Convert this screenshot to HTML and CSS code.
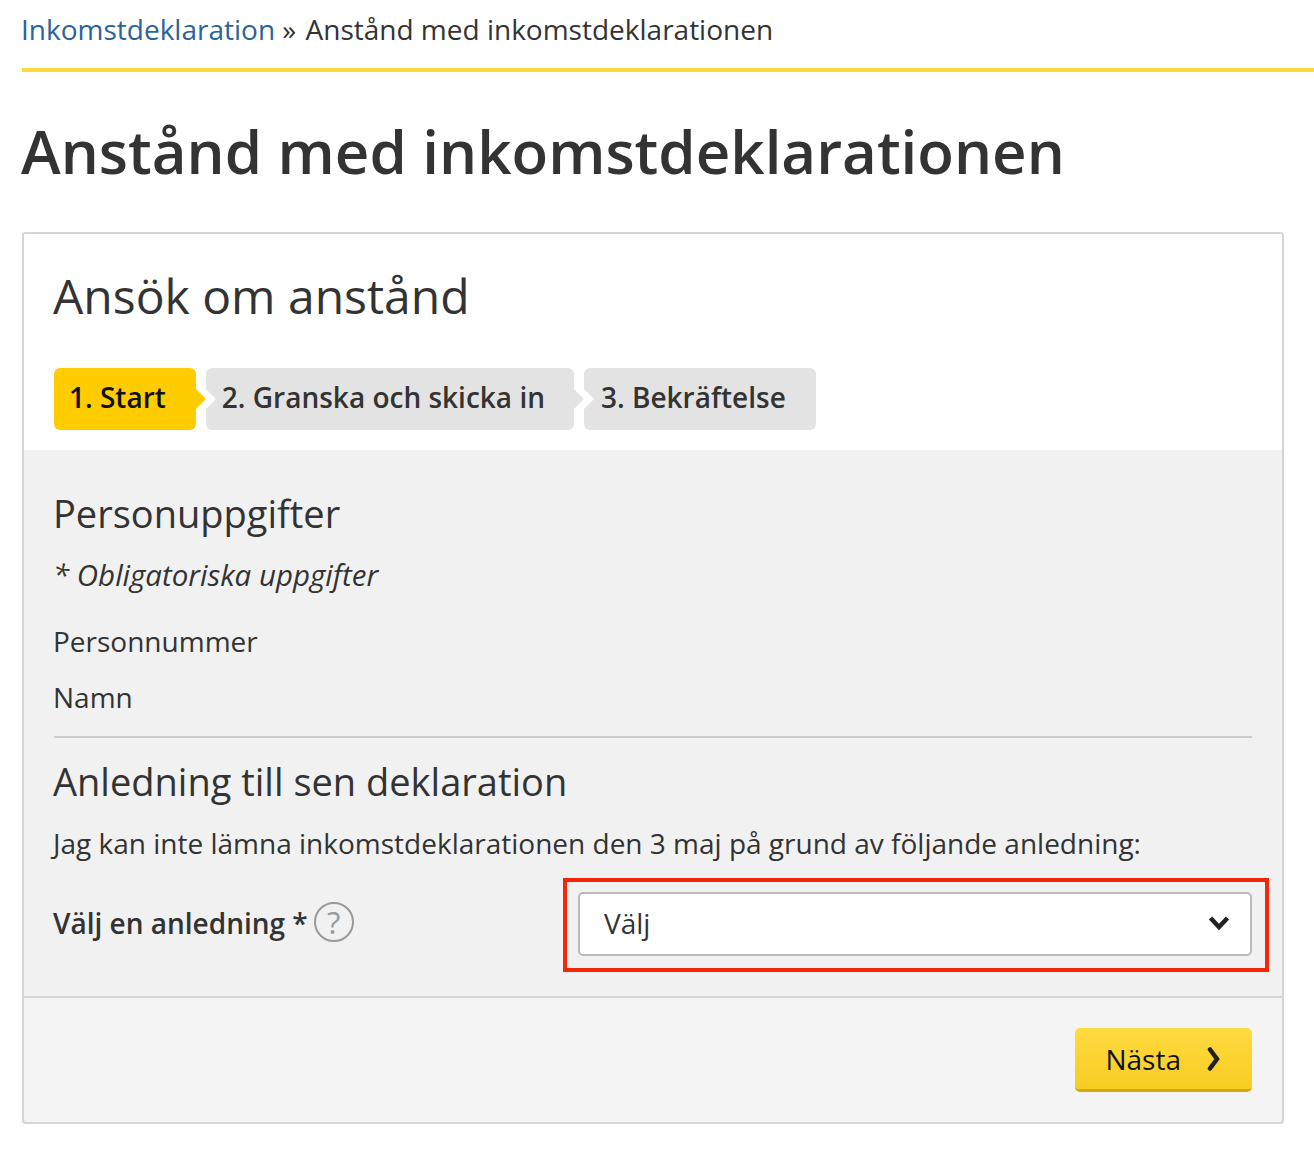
FILE: index.html
```html
<!DOCTYPE html>
<html lang="sv">
<head>
    <meta charset="UTF-8">
    <title>Anstånd med inkomstdeklarationen</title>
    <link rel="stylesheet" href="styles.css">
</head>
<body>
    <div class="breadcrumb"><a href="#">Inkomstdeklaration</a> <span class="separator">»</span> Anstånd med inkomstdeklarationen</div>
    <h1>Anstånd med inkomstdeklarationen</h1>
    <div class="panel">
        <div class="panel-top">
            <h2>Ansök om anstånd</h2>
            <div class="steps">
                <div class="step active">1. Start</div>
                <div class="step">2. Granska och skicka in</div>
                <div class="step">3. Bekräftelse</div>
            </div>
        </div>
        <div class="panel-body">
            <h3>Personuppgifter</h3>
            <p class="required-note">* Obligatoriska uppgifter</p>
            <div class="info-row">Personnummer</div>
            <div class="info-row">Namn</div>
            <hr>
            <h3 class="reason-title">Anledning till sen deklaration</h3>
            <p class="reason-text">Jag kan inte lämna inkomstdeklarationen den 3 maj på grund av följande anledning:</p>
            <div class="reason-row">
                <div class="reason-label">
                    <span>Välj en anledning *</span>
                    <span class="help">?</span>
                </div>
                <div class="highlight">
                    <div class="select">
                        <span class="select-value">Välj</span>
                        <svg class="select-arrow" width="22" height="16" viewBox="0 0 22 16"><path d="M2.5 3 L11 12 L19.5 3" fill="none" stroke="#222" stroke-width="4.5"/></svg>
                    </div>
                </div>
            </div>
        </div>
        <div class="panel-footer">
            <button class="next-btn">
                Nästa
                <svg width="14" height="24" viewBox="0 0 14 24"><path d="M3 2.5 L10 12 L3 21.5" fill="none" stroke="#222" stroke-width="4.5" stroke-linecap="round"/></svg>
            </button>
        </div>
    </div>
</body>
</html>
```

FILE: styles.css
```css
body {
    font-family: "Open Sans", "Liberation Sans", sans-serif;
    margin: 0;
    padding: 0 0 0 22px;
    color: #333;
    background-color: #fff;
}
a {
    color: #2a6496;
    text-decoration: none;
}
.breadcrumb {
    font-size: 28px;
    line-height: 38px;
    padding-top: 10px;
    height: 58px;
    text-indent: -1px;
    border-bottom: 4px solid #ffd83d;
}
.separator {
    margin-right: 2px;
}
h1 {
    font-size: 60px;
    font-weight: 600;
    line-height: 78px;
    margin: 40px 0 42px -1px;
}
.panel {
    width: 1258px;
    border: 2px solid #d4d4d4;
    border-radius: 4px;
    background-color: #f4f4f4;
}
.panel-top {
    background-color: #fff;
    padding: 30px 30px 20px;
}
h2 {
    font-size: 48px;
    font-weight: 400;
    line-height: 64px;
    margin: 0 0 40px -1px;
}
.steps {
    display: flex;
    gap: 10px;
}
.step {
    position: relative;
    font-size: 28px;
    font-weight: 600;
    line-height: 58px;
    padding: 0 29px 4px 16px;
    background-color: #e3e3e3;
    border-radius: 6px;
}
.step.active {
    padding-left: 15px;
    padding-right: 30px;
    background-color: #ffcc00;
    color: #111;
}
.step:last-child {
    padding-left: 17px;
    padding-right: 30px;
}
/* arrow on the right of a step, white notch on the left of the next */
.step::after {
    content: "";
    position: absolute;
    right: -10px;
    top: 21px;
    border-left: 10px solid #e3e3e3;
    border-top: 10px solid transparent;
    border-bottom: 10px solid transparent;
}
.step.active::after {
    border-left-color: #ffcc00;
}
.step:last-child::after {
    display: none;
}
.step:not(.active)::before {
    content: "";
    position: absolute;
    left: 0;
    top: 21px;
    border-left: 10px solid #fff;
    border-top: 10px solid transparent;
    border-bottom: 10px solid transparent;
}
.panel-body {
    background-color: #f1f1f1;
    padding: 35px 30px 24px;
    border-bottom: 2px solid #d4d4d4;
}
h3 {
    font-size: 38px;
    font-weight: 400;
    line-height: 56px;
    margin: 0 0 0 -1px;
}
.required-note {
    font-size: 29.5px;
    font-style: italic;
    line-height: 40px;
    margin: 14px 0 27px -1px;
}
.info-row {
    font-size: 28px;
    line-height: 38px;
    margin: 0 0 18px -1px;
}
.info-row + .info-row {
    margin-bottom: 20px;
}
hr {
    border: 0;
    border-top: 2px solid #ccc;
    margin: 0;
}
.reason-title {
    margin-top: 15px;
}
.reason-text {
    font-size: 28px;
    line-height: 38px;
    margin: 15px 0 16px -1px;
}
.reason-row {
    display: flex;
    align-items: center;
    justify-content: space-between;
}
.reason-label {
    display: flex;
    align-items: center;
    gap: 6px;
    margin: 0 0 4px -1px;
    font-size: 28px;
    font-weight: 600;
}
.help {
    display: flex;
    align-items: center;
    justify-content: center;
    box-sizing: border-box;
    width: 40px;
    height: 40px;
    margin-bottom: 2px;
    border: 2px solid #999;
    border-radius: 50%;
    font-size: 31px;
    font-weight: 400;
    color: #999;
}
.highlight {
    border: 4px solid #f5250a;
    padding: 10px 13px 12px 11px;
    margin-right: -17px;
}
.select {
    display: flex;
    align-items: center;
    justify-content: space-between;
    box-sizing: border-box;
    width: 674px;
    height: 64px;
    padding: 0 20px 0 24px;
    font-size: 28px;
    background-color: #fff;
    border: 2px solid #bbb;
    border-radius: 5px;
}
.select-value {
    padding-bottom: 3px;
}
.select-arrow {
    margin-bottom: 2px;
}
.panel-footer {
    display: flex;
    justify-content: flex-end;
    padding: 30px;
}
.next-btn {
    display: flex;
    align-items: center;
    gap: 26px;
    height: 64px;
    padding: 0 31px 0 30px;
    font-family: inherit;
    font-size: 28px;
    color: #111;
    background: linear-gradient(#ffdb40, #f8cc22);
    border: 0;
    border-bottom: 3px solid #d3a90f;
    border-radius: 5px;
}
```
